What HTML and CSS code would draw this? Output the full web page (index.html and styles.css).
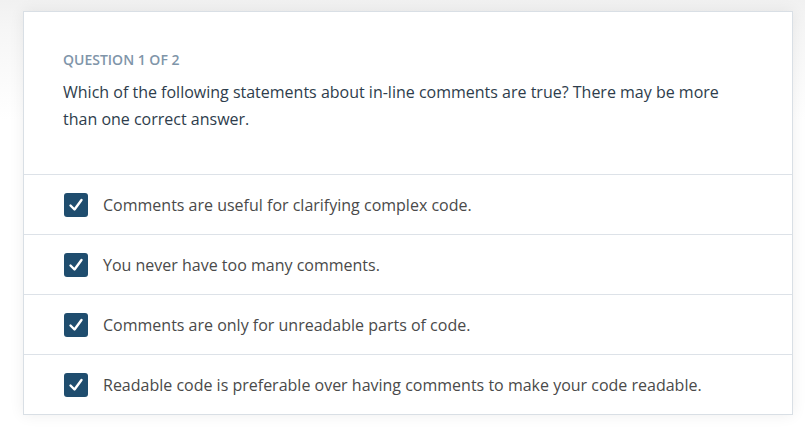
FILE: index.html
```html
<!DOCTYPE html>
<html>
<head>
<meta charset="utf-8">
<link rel="stylesheet" href="styles.css">
</head>
<body>
<div class="card">
  <div class="header">
    <div class="label">Question 1 of 2</div>
    <div class="question">Which of the following statements about in-line comments are true? There may be more than one correct answer.</div>
  </div>
  <ul class="options">
    <li class="option"><span class="box"><svg viewBox="0 0 24 24" width="24" height="24"><path d="M6.5 12.5 L10.5 16.5 L17.5 7" fill="none" stroke="#fff" stroke-width="2.4" stroke-linecap="round" stroke-linejoin="round"/></svg></span><span class="text">Comments are useful for clarifying complex code.</span></li>
    <li class="option"><span class="box"><svg viewBox="0 0 24 24" width="24" height="24"><path d="M6.5 12.5 L10.5 16.5 L17.5 7" fill="none" stroke="#fff" stroke-width="2.4" stroke-linecap="round" stroke-linejoin="round"/></svg></span><span class="text">You never have too many comments.</span></li>
    <li class="option"><span class="box"><svg viewBox="0 0 24 24" width="24" height="24"><path d="M6.5 12.5 L10.5 16.5 L17.5 7" fill="none" stroke="#fff" stroke-width="2.4" stroke-linecap="round" stroke-linejoin="round"/></svg></span><span class="text">Comments are only for unreadable parts of code.</span></li>
    <li class="option"><span class="box"><svg viewBox="0 0 24 24" width="24" height="24"><path d="M6.5 12.5 L10.5 16.5 L17.5 7" fill="none" stroke="#fff" stroke-width="2.4" stroke-linecap="round" stroke-linejoin="round"/></svg></span><span class="text">Readable code is preferable over having comments to make your code readable.</span></li>
  </ul>
</div>
</body>
</html>
```
FILE: styles.css
```css
html, body {
  margin: 0;
  padding: 0;
  background: #ffffff;
}
body {
  font-family: "Open Sans", "Liberation Sans", sans-serif;
  padding: 11px 12px 0 23px;
  background: linear-gradient(#f1f1f1 0, #f6f6f6 30px, #ffffff 120px);
  min-height: 429px;
  box-sizing: border-box;
}
.card {
  width: 770px;
  box-sizing: border-box;
  background: #fff;
  border: 1px solid #d9dfe5;
  box-shadow: 0 0 14px rgba(0, 0, 0, 0.07);
}
.header {
  padding: 38px 39px 41px;
  border-bottom: 1px solid #dde2e8;
}
.label {
  font-size: 14px;
  line-height: 20px;
  font-weight: 600;
  text-transform: uppercase;
  color: #7f95a9;
  margin-bottom: 9px;
}
.question {
  font-size: 16px;
  line-height: 27px;
  color: #2e3d4c;
}
.options {
  list-style: none;
  margin: 0;
  padding: 0;
}
.option {
  display: flex;
  align-items: center;
  gap: 15px;
  height: 59px;
  padding: 0 40px;
  border-top: 1px solid #dde2e8;
}
.option:first-child {
  border-top: none;
}
.box {
  width: 24px;
  height: 24px;
  border-radius: 3px;
  background: #1f4d6e;
  display: flex;
  flex: none;
}
.text {
  font-size: 16px;
  color: #4a4a4a;
}
```
